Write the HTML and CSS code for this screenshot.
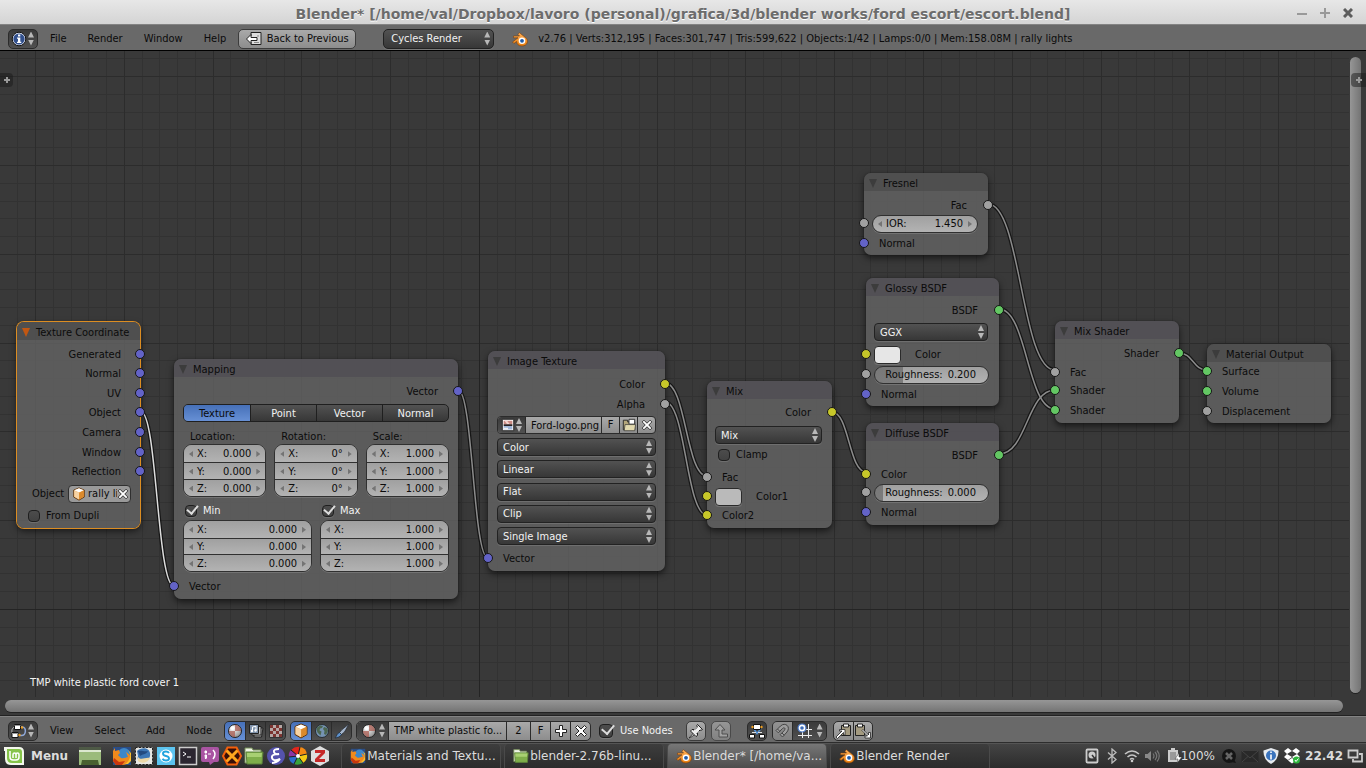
FILE: index.html
```html
<!DOCTYPE html>
<html lang="en">
<head>
<meta charset="utf-8">
<title>Blender* [/home/val/Dropbox/lavoro (personal)/grafica/3d/blender works/ford escort/escort.blend]</title>
<link rel="stylesheet" href="styles.css">
</head>
<body>
<svg class="defs" aria-hidden="true">
  <defs>
    <linearGradient id="gOrange" x1="0" y1="0" x2="0" y2="1"><stop offset="0" stop-color="#ffb25a"/><stop offset="1" stop-color="#e87d0d"/></linearGradient>
    <radialGradient id="gBall" cx=".35" cy=".3" r=".8"><stop offset="0" stop-color="#fff"/><stop offset="1" stop-color="#888"/></radialGradient>
    <symbol id="blender" viewBox="0 0 16 16">
      <path d="M.500 11 6 6.800H1.500V5h6L5.800 3.300 7.500 1.800l6.300 5c3.200 2.700 1.700 8.200-3.800 8.200-3.600 0-5.400-2-5.400-4.600L2 12.500z" fill="url(#gOrange)" stroke="#7a3c08" stroke-width=".6"/>
      <circle cx="10" cy="9.800" r="3.300" fill="#fff"/><circle cx="10" cy="9.800" r="1.900" fill="#1f5ba8"/>
    </symbol>
    <symbol id="info" viewBox="0 0 16 16">
      <circle cx="8" cy="8" r="6.800" fill="#d8dfee" stroke="#111" stroke-width="1"/><circle cx="8" cy="8" r="5.600" fill="#314f8c"/>
      <path d="M7 3.500h2.300v2H7zM6 6.500h3.300v4.300h1V12H6v-1.200h1V7.700H6z" fill="#fff"/>
    </symbol>
    <symbol id="back" viewBox="0 0 16 16">
      <path d="M5 1.500h10v12H5V11M5 5V1.500" fill="#ddd" stroke="#222"/><path d="M11 5h2M13 11.500H8" stroke="#888"/>
      <path d="M.500 8 5 3.500v3h6v3H5v3z" fill="#fff" stroke="#222"/>
    </symbol>
    <symbol id="nodetree" viewBox="0 0 16 16">
      <path d="M9 4h2.500c4 0 4 8.500-1 8.500H8" fill="none" stroke="#8fa8d8" stroke-width="1.500"/><path d="M3 4.500C.500 5 .500 9 1.500 10.500" fill="none" stroke="#bbb"/>
      <path d="M3.500 1.500h6v5h-6zM1 9.500h6v5H1z" fill="#fff" stroke="#111"/><path d="M3.500 2.500h6M1 10.500h6" stroke="#999"/>
      <circle cx="11" cy="4.500" r="1.200" fill="#f0a020"/><circle cx="8.500" cy="12" r="1.200" fill="#f0a020"/>
    </symbol>
    <symbol id="material" viewBox="0 0 16 16">
      <circle cx="8" cy="8" r="6.500" fill="url(#gBall)" stroke="#222"/><path d="M8 8V1.700A6.300 6.300 0 0 1 14 8zM8 8v6.300A6.300 6.300 0 0 1 2 8z" fill="#a9564a" opacity=".7"/>
      <ellipse cx="5.500" cy="5" rx="2.200" ry="2" fill="#fff" opacity=".8"/>
    </symbol>
    <symbol id="compositor" viewBox="0 0 16 16">
      <path d="M6 5h9l-1.500 9H6z" fill="#aaa" stroke="#222"/><path d="M4 3.500h9V12H4z" fill="#bbb" stroke="#222"/><path d="M1.500 1.500h9v9h-9z" fill="#8194ad" stroke="#222"/><path d="M4.500 8V4L8 3.300V7.500" fill="none" stroke="#fff"/><circle cx="4" cy="8" r="1.200" fill="#fff"/><circle cx="7.500" cy="7.500" r="1.200" fill="#fff"/>
    </symbol>
    <symbol id="texture" viewBox="0 0 16 16">
      <path d="M1.500 1.500h13v13h-13z" fill="#b5a8a6" stroke="#333"/><path d="M2 2h3v3H2zM8 2h3v3H8zM5 5h3v3H5zM11 5h3v3h-3zM2 8h3v3H2zM8 8h3v3H8zM5 11h3v3H5zM11 11h3v3h-3z" fill="#7c3430"/>
    </symbol>
    <symbol id="cube" viewBox="0 0 16 16">
      <path d="M8 1 14 3.500v8L8 15l-6-3.500v-8z" fill="#e9a04b" stroke="#58300a"/><path d="M2.500 4 8 6.500V14.200L2.500 11z" fill="#f7d3a4"/><path d="M2.500 3.700 8 1.500l5.500 2.200L8 6.300z" fill="#fff"/><path d="M8.200 6.500 13.500 4v7.200L8.200 14.200z" fill="#dc8a2c"/>
    </symbol>
    <symbol id="world" viewBox="0 0 16 16">
      <circle cx="8" cy="8" r="6.500" fill="#7593b3" stroke="#272d33"/><path d="M3 4.500 6 2.500l3 .500-1 2-2 .500-.500 2 2 1-1 4-3-3-1-3zM10 4l3 1 1 3-2 4-2-1 .500-3L9 6z" fill="#4c6650"/>
    </symbol>
    <symbol id="brush" viewBox="0 0 16 16">
      <path d="M15 1 8 6.500 5.500 9.500 7.500 11.500l3-2.500z" fill="#a3b4ca" stroke="#2a2f36" stroke-width=".8"/><path d="M5.500 9.500 7.500 11.500c-1 2.500-4 3-6.500 3.500C3 13 2.500 10.500 5.500 9.500z" fill="#5f92cc" stroke="#26303c" stroke-width=".8"/>
    </symbol>
    <symbol id="cross" viewBox="0 0 16 16">
      <path d="m2.500 4.500 2-2L8 6l3.500-3.500 2 2L10 8l3.500 3.500-2 2L8 10l-3.500 3.500-2-2L6 8z" fill="#fff" stroke="#222"/>
    </symbol>
    <symbol id="plus" viewBox="0 0 16 16">
      <path d="M6.500 2.500h3v4h4v3h-4v4h-3v-4h-4v-3h4z" fill="#fff" stroke="#222"/>
    </symbol>
    <symbol id="pin" viewBox="0 0 16 16">
      <path d="M6 9.500 1 15l1.500-.500L7.500 11z" fill="#eee" stroke="#222" stroke-width=".8"/><path d="m9.500 1.500 5 5-1.500.800-1-.300-2.500 2.500v3L8 13.500 2.500 8 4 6.500h3L9.300 4l-.500-1.500z" fill="#eee" stroke="#222"/><path d="m5 8 4-4M8 11l3-3" stroke="#999"/>
    </symbol>
    <symbol id="up" viewBox="0 0 16 16">
      <path d="m7 1.500 5 5.500H9v4h5.500v3H6V7H2z" fill="#bbb" stroke="#444"/>
    </symbol>
    <symbol id="autonode" viewBox="0 0 16 16">
      <path d="m4.500 5.500 3.500 5 4-5" fill="none" stroke="#5596dc" stroke-width="1.500"/><path d="M4.500 1.500h7v5h-7zM.500 11.500h5v3.500h-5zM10.500 11.500h5v3.500h-5z" fill="#fff" stroke="#111"/><path d="M3 9.500h4M9 9.500h4" stroke="#ddd"/><circle cx="3.500" cy="4" r="1.200" fill="#f0a020"/><circle cx="12.500" cy="4" r="1.200" fill="#f0a020"/>
    </symbol>
    <symbol id="magnet" viewBox="0 0 16 16">
      <path d="m2 7.500 4.500-4.500c5-4.500 10.500 1 6.500 6L8.500 14l-2.300-2.300L10.300 7.500C12 5 10 4 8.500 5.500L4.300 9.800z" fill="#b5b5b5" stroke="#444"/><path d="m3.500 6 2.300 2.300M8 10l2.300 2.300" stroke="#444"/>
    </symbol>
    <symbol id="snapgrid" viewBox="0 0 16 16">
      <path d="M5.500 1v14M11.500 1v14M1 6.500h14M1 12.500h14" stroke="#eee"/><circle cx="5" cy="5" r="4" fill="#fff" stroke="#4474c4" stroke-width="1.200"/><circle cx="5" cy="5" r="1.800" fill="#3c6cb8"/>
    </symbol>
    <symbol id="copy" viewBox="0 0 16 16">
      <path d="M6.500 2.500h9v10h-9z" fill="#a39a80" stroke="#222"/><path d="M8.500 1h5v3h-5z" fill="#fff" stroke="#222"/><path d="m1 14 6-6H4.500V6.500H10V12H8.500V9.500l-6 6z" fill="#fff" stroke="#222" stroke-width=".8"/>
    </symbol>
    <symbol id="paste" viewBox="0 0 16 16">
      <path d="M.500 2.500h9v10h-9z" fill="#a39a80" stroke="#222"/><path d="M2.500 1h5v3h-5z" fill="#fff" stroke="#222"/><path d="m7 7.500 5.500 5.500H10v2h5.500V9.500h-2V12L8 6.500z" fill="#fff" stroke="#222" stroke-width=".8"/>
    </symbol>
    <symbol id="image" viewBox="0 0 16 16">
      <path d="M1.500 1.500h13v13h-13z" fill="#fff" stroke="#222"/><path d="M3 3h10v4H3z" fill="#c98a83"/><path d="M4 3h3l3 4H7z" fill="#f2d4ce"/><path d="M3 7h10v2H3z" fill="#2b2222"/><path d="M3 9h10v4H3z" fill="#9db4d6"/><path d="M3 11h5v2H3z" fill="#f1f1f1"/>
    </symbol>
    <symbol id="open" viewBox="0 0 16 16">
      <path d="M1.500 2.500h5v2h8v9h-13z" fill="#b5a77a" stroke="#222"/><path d="M8 1.500h6.500V7H8z" fill="#fff" stroke="#222"/><path d="M3.500 7.500h12l-1 7h-12z" fill="#e2d9ae" stroke="#333" stroke-width=".8"/>
    </symbol>
    <symbol id="firefox" viewBox="0 0 20 20">
      <rect x="1" y="1" width="18" height="18" fill="#2a4d86"/><circle cx="12" cy="8" r="6" fill="#3d87c9"/><path d="M1 5 3 2v3l4-1 1 3-2 2 3 3c3 1 5-1 7-1l-2-5 4 3c1 5-1 10-8 10H4L1 15z" fill="#f08a1c"/><path d="M16 4c4 5 2 11-3 14h3l3-3V7z" fill="#fbc02c"/><path d="m2 12 5 4 6-1-3 4H4l-3-4z" fill="#c9370f"/>
    </symbol>
    <symbol id="folder" viewBox="0 0 20 20">
      <path d="M1 2h7l1 2h8v13H1z" fill="#eef4e4" stroke="#738c55"/><path d="M2 6h17l-1 12H3z" fill="#7fae4a" stroke="#5c813a"/><path d="M3 7h15l-.500 4H3z" fill="#a8d072"/>
    </symbol>
    <pattern id="grid" x="35" y="114" width="444" height="444" patternUnits="userSpaceOnUse">
      <path class="grid-minor" d="M18.500 0v444M36.500 0v444M53.500 0v444M71.500 0v444M107.500 0v444M124.500 0v444M142.500 0v444M160.500 0v444M195.500 0v444M213.500 0v444M231.500 0v444M249.500 0v444M284.500 0v444M302.500 0v444M320.500 0v444M337.500 0v444M373.500 0v444M391.500 0v444M408.500 0v444M426.500 0v444M0 18.500h444M0 36.500h444M0 53.500h444M0 71.500h444M0 107.500h444M0 124.500h444M0 142.500h444M0 160.500h444M0 195.500h444M0 213.500h444M0 231.500h444M0 249.500h444M0 284.500h444M0 302.500h444M0 320.500h444M0 337.500h444M0 373.500h444M0 391.500h444M0 408.500h444M0 426.500h444"/>
      <path class="grid-major" d="M.500 0v444M89.500 0v444M178.500 0v444M266.500 0v444M355.500 0v444M0 .500h444M0 89.500h444M0 178.500h444M0 266.500h444M0 355.500h444"/>
    </pattern>
  </defs>
</svg>

<header class="titlebar">
  <h1>Blender* [/home/val/Dropbox/lavoro (personal)/grafica/3d/blender works/ford escort/escort.blend]</h1>
  <div class="window-buttons">
    <button type="button" aria-label="Minimize"><svg viewBox="0 0 10 10"><path d="M0 6h10" stroke="#999" stroke-width="2"/></svg></button>
    <button type="button" aria-label="Maximize"><svg viewBox="0 0 10 10"><path d="M0 5h10M5 0v10" stroke="#999" stroke-width="2"/></svg></button>
    <button type="button" aria-label="Close"><svg viewBox="0 0 10 10"><path d="m1 1 8 8M9 1 1 9" stroke="#5c5c5c" stroke-width="3"/></svg></button>
  </div>
</header>

<nav class="header info-header">
  <button type="button" class="editor-type updown" aria-label="Editor type"><svg class="ic"><use href="#info"/></svg></button>
  <div class="menus">
    <button type="button">File</button><button type="button">Render</button><button type="button">Window</button><button type="button">Help</button>
  </div>
  <button type="button" class="light-button back"><svg class="ic"><use href="#back"/></svg>Back to Previous</button>
  <div class="menu updown engine"><select aria-label="Render engine"><option>Cycles Render</option></select></div>
  <svg class="ic logo"><use href="#blender"/></svg>
  <span class="stats">v2.76 | Verts:312,195 | Faces:301,747 | Tris:599,622 | Objects:1/42 | Lamps:0/0 | Mem:158.08M | rally lights</span>
</nav>

<main class="editor">
  <svg class="grid" aria-hidden="true"><rect width="100%" height="100%" fill="url(#grid)"/><path class="grid-axis" d="M479.500 0v648M0 558.500h1349"/></svg>
  <svg class="links" aria-hidden="true">
    <defs>
      <path id="l1" d="M141 361C157 361 157 535 174 535"/>
      <path id="l2" d="M458 339C473 339 473 507 488 507"/>
      <path id="l3" d="M665 332C686 332 686 425 707 425"/>
      <path id="l4" d="M665 351C686 351 686 464 707 464"/>
      <path id="l5" d="M832 361C849 361 849 421 866 421"/>
      <path id="l6" d="M988 153C1021 153 1021 319 1055 319"/>
      <path id="l7" d="M999 258C1027 258 1027 358 1055 358"/>
      <path id="l8" d="M999 403C1027 403 1027 339 1055 339"/>
      <path id="l9" d="M1179 302C1193 302 1193 319 1207 319"/>
    </defs>
    <g class="wire-shadow"><use href="#l1"/><use href="#l2"/><use href="#l3"/><use href="#l4"/><use href="#l5"/><use href="#l6"/><use href="#l7"/><use href="#l8"/><use href="#l9"/></g>
    <g class="wire"><use class="wire-active" href="#l1"/><use href="#l2"/><use href="#l3"/><use href="#l4"/><use href="#l5"/><use href="#l6"/><use href="#l7"/><use href="#l8"/><use href="#l9"/></g>
  </svg>

  <section class="node plain selected n-texcoord">
    <h2>Texture Coordinate</h2>
    <ul class="sockets seven">
      <li class="out vec">Generated</li><li class="out vec">Normal</li><li class="out vec">UV</li><li class="out vec">Object</li><li class="out vec">Camera</li><li class="out vec">Window</li><li class="out vec">Reflection</li>
    </ul>
    <div class="object-row">
      <label for="obj">Object</label>
      <div class="object-field"><svg class="ic"><use href="#cube"/></svg><input id="obj" value="rally li"><button type="button" aria-label="Clear object"><svg class="ic"><use href="#cross"/></svg></button></div>
    </div>
    <label class="check dark-text"><input type="checkbox">From Dupli</label>
  </section>

  <section class="node n-mapping">
    <h2>Mapping</h2>
    <ul class="sockets"><li class="out vec">Vector</li></ul>
    <div class="tabs"><button type="button" class="on">Texture</button><button type="button">Point</button><button type="button">Vector</button><button type="button">Normal</button></div>
    <div class="cols three">
      <fieldset><legend>Location:</legend><div class="stack">
        <label class="num">X:<input value="0.000"></label><label class="num">Y:<input value="0.000"></label><label class="num">Z:<input value="0.000"></label></div></fieldset>
      <fieldset><legend>Rotation:</legend><div class="stack">
        <label class="num">X:<input value="0°"></label><label class="num">Y:<input value="0°"></label><label class="num">Z:<input value="0°"></label></div></fieldset>
      <fieldset><legend>Scale:</legend><div class="stack">
        <label class="num">X:<input value="1.000"></label><label class="num">Y:<input value="1.000"></label><label class="num">Z:<input value="1.000"></label></div></fieldset>
    </div>
    <div class="cols two">
      <div><label class="check"><input type="checkbox" checked>Min</label><div class="stack">
        <label class="num">X:<input value="0.000"></label><label class="num">Y:<input value="0.000"></label><label class="num">Z:<input value="0.000"></label></div></div>
      <div><label class="check"><input type="checkbox" checked>Max</label><div class="stack">
        <label class="num">X:<input value="1.000"></label><label class="num">Y:<input value="1.000"></label><label class="num">Z:<input value="1.000"></label></div></div>
    </div>
    <ul class="sockets"><li class="in vec">Vector</li></ul>
  </section>

  <section class="node n-image">
    <h2>Image Texture</h2>
    <ul class="sockets"><li class="out col">Color</li><li class="out val">Alpha</li></ul>
    <div class="id-block">
      <button type="button" class="id-type updown" aria-label="Browse image"><svg class="ic"><use href="#image"/></svg></button><input value="Ford-logo.png" aria-label="Image name"><button type="button">F</button><button type="button" aria-label="Open image"><svg class="ic"><use href="#open"/></svg></button><button type="button" aria-label="Unlink image"><svg class="ic"><use href="#cross"/></svg></button>
    </div>
    <div class="menus-stack">
      <div class="menu updown"><select aria-label="Color space"><option>Color</option></select></div>
      <div class="menu updown"><select aria-label="Interpolation"><option>Linear</option></select></div>
      <div class="menu updown"><select aria-label="Projection"><option>Flat</option></select></div>
      <div class="menu updown"><select aria-label="Extension"><option>Clip</option></select></div>
      <div class="menu updown"><select aria-label="Source"><option>Single Image</option></select></div>
    </div>
    <ul class="sockets"><li class="in vec">Vector</li></ul>
  </section>

  <section class="node n-mix">
    <h2>Mix</h2>
    <ul class="sockets"><li class="out col">Color</li></ul>
    <div class="menu updown"><select aria-label="Blend type"><option>Mix</option></select></div>
    <label class="check dark-text"><input type="checkbox">Clamp</label>
    <ul class="sockets"><li class="in val">Fac</li><li class="in col with-swatch"><button type="button" class="swatch grey" aria-label="Color1 value"></button>Color1</li><li class="in col">Color2</li></ul>
  </section>

  <section class="node plain n-fresnel">
    <h2>Fresnel</h2>
    <ul class="sockets"><li class="out val">Fac</li><li class="in val field"><label class="num single">IOR:<input value="1.450"></label></li><li class="in vec">Normal</li></ul>
  </section>

  <section class="node n-glossy">
    <h2>Glossy BSDF</h2>
    <ul class="sockets"><li class="out shd">BSDF</li></ul>
    <div class="menu updown"><select aria-label="Distribution"><option>GGX</option></select></div>
    <ul class="sockets"><li class="in col with-swatch"><button type="button" class="swatch" aria-label="Color value"></button>Color</li><li class="in val field"><label class="slider" style="--fill:25%">Roughness:<input value="0.200"></label></li><li class="in vec">Normal</li></ul>
  </section>

  <section class="node n-diffuse">
    <h2>Diffuse BSDF</h2>
    <ul class="sockets"><li class="out shd">BSDF</li><li class="in col">Color</li><li class="in val field"><label class="slider" style="--fill:7%">Roughness:<input value="0.000"></label></li><li class="in vec">Normal</li></ul>
  </section>

  <section class="node n-mixshader">
    <h2>Mix Shader</h2>
    <ul class="sockets"><li class="out shd">Shader</li><li class="in val">Fac</li><li class="in shd">Shader</li><li class="in shd">Shader</li></ul>
  </section>

  <section class="node plain n-output">
    <h2>Material Output</h2>
    <ul class="sockets"><li class="in shd">Surface</li><li class="in shd">Volume</li><li class="in val">Displacement</li></ul>
  </section>

  <p class="material-name">TMP white plastic ford cover 1</p>
  <div class="scroll-v"></div>
  <div class="scroll-h"></div>
  <button type="button" class="region-tab left" aria-label="Show tool shelf"></button>
  <button type="button" class="region-tab right" aria-label="Show properties"></button>
</main>

<nav class="header node-header">
  <button type="button" class="editor-type updown" aria-label="Editor type"><svg class="ic"><use href="#nodetree"/></svg></button>
  <div class="menus"><button type="button">View</button><button type="button">Select</button><button type="button">Add</button><button type="button">Node</button></div>
  <div class="toggle-group tree"><button type="button" class="on" aria-label="Shader nodes"><svg class="ic"><use href="#material"/></svg></button><button type="button" aria-label="Compositing nodes"><svg class="ic"><use href="#compositor"/></svg></button><button type="button" aria-label="Texture nodes"><svg class="ic"><use href="#texture"/></svg></button></div>
  <div class="toggle-group"><button type="button" class="on" aria-label="Object"><svg class="ic"><use href="#cube"/></svg></button><button type="button" aria-label="World"><svg class="ic"><use href="#world"/></svg></button><button type="button" aria-label="Line style"><svg class="ic"><use href="#brush"/></svg></button></div>
  <div class="id-block big">
    <button type="button" class="id-type updown" aria-label="Browse material"><svg class="ic"><use href="#material"/></svg></button><input value="TMP white plastic fo..." aria-label="Material name"><button type="button" class="users">2</button><button type="button">F</button><button type="button" aria-label="Add material"><svg class="ic"><use href="#plus"/></svg></button><button type="button" aria-label="Unlink material"><svg class="ic"><use href="#cross"/></svg></button>
  </div>
  <label class="check use-nodes"><input type="checkbox" checked>Use Nodes</label>
  <button type="button" class="light-button sq" aria-label="Pin"><svg class="ic"><use href="#pin"/></svg></button>
  <button type="button" class="light-button sq dim" aria-label="Go to parent"><svg class="ic"><use href="#up"/></svg></button>
  <button type="button" class="dark-button sq" aria-label="Auto offset"><svg class="ic"><use href="#autonode"/></svg></button>
  <div class="snap"><button type="button" class="magnet" aria-label="Snap"><svg class="ic"><use href="#magnet"/></svg></button><button type="button" class="snap-mode updown" aria-label="Snap mode"><svg class="ic"><use href="#snapgrid"/></svg></button></div>
  <div class="clip"><button type="button" aria-label="Copy nodes"><svg class="ic"><use href="#copy"/></svg></button><button type="button" aria-label="Paste nodes"><svg class="ic"><use href="#paste"/></svg></button></div>
</nav>

<footer class="taskbar">
  <button type="button" class="start"><svg class="app" viewBox="0 0 20 20"><path d="M0 1h15q5 0 5 5v13H7q-6 0-6-6V5H0z" fill="#f4f8ee"/><path d="M3 3h12q3 0 3 3v11H8q-5 0-5-5z" fill="#86c44a"/><path d="M6 5v6q0 3 3 3h3q3 0 3-3V9q0-2-1.500-2T12 9v3M12 9q0-2-1.500-2T9 9v3" fill="none" stroke="#fff" stroke-width="1.500"/></svg>Menu</button>
  <div class="launchers">
    <button type="button" class="desktop" aria-label="Show desktop"><svg class="app wide" viewBox="0 0 22 20"><path d="M0 1h22v18H0z" fill="#9bbb7b"/><path d="M0 1h22v3H0z" fill="#4e5a46"/><path d="M0 4h22v2H0z" fill="#dce8cf"/><path d="M3 14h16l1 5H2z" fill="#4a6130"/></svg></button>
    <button type="button" aria-label="Firefox"><svg class="app"><use href="#firefox"/></svg></button>
    <button type="button" aria-label="Thunderbird"><svg class="app" viewBox="0 0 20 20"><path d="M1.500 1.500h17v17h-17z" fill="#e8e8e4" stroke="#222" stroke-dasharray="2 1.500"/><path d="M3 5c4-4 12-4 13 2 1 5-3 9-8 9-4 0-5-4-4-6z" fill="#3c76b4"/><path d="M4 11c3 4 7 0 12 1-2 5-9 6-12 3z" fill="#edd9a8"/><path d="M4 5c4-1 6 1 10 0-2 4-6 3-8 5z" fill="#234b80"/></svg></button>
    <button type="button" aria-label="Skype"><svg class="app" viewBox="0 0 20 20"><rect x="1" y="1" width="18" height="18" fill="#5cc4f0"/><circle cx="10" cy="10" r="6.500" fill="#fff"/><path d="M13 7q-1-1.500-3-1.500-3 0-3 2t3 2.500 3 2.500-3 2q-2.500 0-3.500-1.800" fill="none" stroke="#21a4de" stroke-width="1.900"/></svg></button>
    <button type="button" aria-label="Terminal"><svg class="app" viewBox="0 0 20 20"><rect x="1.500" y="1.500" width="17" height="17" fill="#2b2630" stroke="#ccc" stroke-width="1.500"/><path d="m5 6 3 2-3 2M9 11h4" fill="none" stroke="#fff"/></svg></button>
    <button type="button" aria-label="Pidgin"><svg class="app" viewBox="0 0 20 20"><path d="M3 1h14q2 0 2 2v11q0 2-2 2h-3l-4 3-1-3H3q-2 0-2-2V3q0-2 2-2z" fill="#a954a2"/><path d="M5 5h1.500v2H5zM5 9h1.500v3l-1 1zM8 8h3" stroke="#fff" fill="#fff"/><path d="M13 4q4 4 0 9" fill="none" stroke="#fff" stroke-width="1.500"/></svg></button>
    <button type="button" aria-label="XBMC"><svg class="app" viewBox="0 0 20 20"><path d="M5.500 1.500h9L19 10l-4.500 8.500h-9L1 10z" fill="#3a0f06" stroke="#f4600c" stroke-width="2"/><path d="m4.500 4.500 11 11m0-11-11 11" stroke="#ffa61e" stroke-width="3"/></svg></button>
    <button type="button" aria-label="Files"><svg class="app"><use href="#folder"/></svg></button>
    <button type="button" aria-label="Emacs"><svg class="app" viewBox="0 0 20 20"><circle cx="10" cy="10" r="9" fill="#5553ad"/><path d="M13 3Q7 3 8 6t5 2q-8 0-7 4t8 1q-4 4-8 4" fill="none" stroke="#fff" stroke-width="2"/></svg></button>
    <button type="button" aria-label="Picasa"><svg class="app" viewBox="0 0 20 20"><path d="M10 10 3 4Q7 0 12 1z" fill="#e2261c"/><path d="m10 10 2-9q6 1 7 7z" fill="#f58a13"/><path d="m10 10 9-2q1 6-4 9z" fill="#f7cb13"/><path d="m10 10 5 7q-5 3-9 1z" fill="#38a33b"/><path d="m10 10-4 8q-5-2-5-7z" fill="#2b6fce"/><path d="m10 10-9 1q-1-4 2-7z" fill="#8a36a4"/><path d="m10 10-7-6M10 10l2-9M10 10l9-2M10 10l5 7M10 10l-4 8M10 10l-9 1" stroke="#222"/><circle cx="10" cy="10" r="2" fill="#fff"/></svg></button>
    <button type="button" aria-label="Zotero"><svg class="app" viewBox="0 0 20 20"><path d="m10 0 9 5v10l-9 5-9-5V5z" fill="#dedede"/><path d="M5 4h10v3L9 13h6v3H5v-3l6-6H5z" fill="#c62828"/></svg></button>
  </div>
  <div class="tasks">
    <button type="button"><svg class="ic"><use href="#firefox"/></svg>Materials and Textu...</button>
    <button type="button"><svg class="ic"><use href="#folder"/></svg>blender-2.76b-linu...</button>
    <button type="button" class="current"><svg class="ic"><use href="#blender"/></svg>Blender* [/home/va...</button>
    <button type="button"><svg class="ic"><use href="#blender"/></svg>Blender Render</button>
  </div>
  <div class="tray">
    <svg class="ic" viewBox="0 0 16 16"><rect x="2.500" y="1.500" width="11" height="13" rx="1" fill="none" stroke="#ccc" stroke-width="1.800"/><circle cx="8" cy="7" r="3.500" fill="#ccc"/><path d="m8 7 4 5" stroke="#333" stroke-width="1.500"/></svg>
    <svg class="ic" viewBox="0 0 16 16"><path d="m4 4.500 8 7L8 15V1l4 3.500-8 7" fill="none" stroke="#bbb" stroke-width="1.300"/></svg>
    <svg class="ic" viewBox="0 0 16 16"><path d="M1 6q7-6 14 0M3.500 9q4.500-4 9 0M6 11.500q2-2 4 0" fill="none" stroke="#c5c5c5" stroke-width="1.600"/><circle cx="8" cy="13" r="1.300" fill="#ccc"/></svg>
    <svg class="ic" viewBox="0 0 16 16"><path d="M1 6h2.500L7 3v10L3.500 10H1z" fill="#888"/><path d="M9 5.500q2 2.500 0 5M11 4q3.500 4 0 8M13 2.500q4.500 5.500 0 11" fill="none" stroke="#777" stroke-width="1.200"/></svg>
    <span class="battery"><svg class="ic" viewBox="0 0 16 16"><path d="M4 0h4v2h3v12H1V2h3z" fill="#ccc"/><path d="M3 4h6v8H3z" fill="#999"/><path d="m12 5-4 6h3l-1 4 5-6h-3z" fill="#fff" stroke="#333" stroke-width=".500"/></svg>100%</span>
    <svg class="ic" viewBox="0 0 16 16"><circle cx="8" cy="8" r="7" fill="#151515"/><path d="m10 14 5 1-2-4z" fill="#151515"/><path d="m5 5 6 6m0-6-6 6" stroke="#666" stroke-width="2.500"/></svg>
    <svg class="ic mail" viewBox="0 0 18 16"><rect x=".500" y="3" width="17" height="11" fill="#292929"/><path d="m1 3 8 7 8-7M1 14l6-5.500M17 14l-6-5.500" fill="none" stroke="#444"/></svg>
    <svg class="ic" viewBox="0 0 16 16"><path d="m8 0 7.500 2.500q.500 9-7.500 13.500Q0 11.500.500 2.500z" fill="#e7ebef"/><circle cx="8" cy="7.500" r="5" fill="#3973bd"/><path d="M8 3.500v1.500M8 6.500v5" stroke="#fff" stroke-width="1.600"/></svg>
    <svg class="ic wide" viewBox="0 0 18 16"><path d="M5 0 9 3l4-3 4 3-3 3 3 3-4 3-4-3-4 3-4-3 3-3-3-3zM9 3 4 6l5 3 5-3z" fill="#fff" fill-rule="evenodd"/><path d="m5 12.500 4-2.500 4 2.500-4 3z" fill="#fff"/><circle cx="13.500" cy="12" r="3.500" fill="#2fb53d"/><path d="m12 12 1 1.500 2.500-3" fill="none" stroke="#fff"/></svg>
    <time>22.42</time>
    <svg class="ic" viewBox="0 0 16 16"><path d="M1.500 2.500h9v7h-9z" fill="none" stroke="#ccc" stroke-width="1.800"/><path d="M12 6h3v7.500H6V11" fill="none" stroke="#ccc" stroke-width="1.800"/></svg>
  </div>
</footer>
</body>
</html>
```
FILE: styles.css
```css
:root {
  --ui: "DejaVu Sans Condensed", "DejaVu Sans", sans-serif;
  --dark: linear-gradient(#3a3a3a, #505050);
  --menu: linear-gradient(#525252, #373737);
  --light: linear-gradient(#a9a9a9, #8d8d8d);
  --blue: linear-gradient(#4670b8, #6790d5);
}
* { box-sizing: border-box; }
body {
  margin: 0;
  height: 100vh;
  display: flex;
  flex-direction: column;
  overflow: hidden;
  background: #393939;
  font: 11px/14px var(--ui);
  color: #0b0b0b;
}
button, input, select { font: inherit; color: inherit; margin: 0; padding: 0; border: 0; background: none; border-radius: 0; outline: 0; }
button { display: inline-flex; align-items: center; justify-content: center; flex: none; }
h1, h2, p, ul { margin: 0; padding: 0; font-weight: normal; list-style: none; }
.defs { position: absolute; width: 0; height: 0; }
.ic { width: 16px; height: 16px; flex: none; display: block; }

/* window title */
.titlebar {
  flex: none;
  height: 24px;
  display: grid;
  grid-template-columns: 80px 1fr 80px;
  align-items: center;
  background: linear-gradient(#e7e7e7, #d4d4d4);
}
.titlebar h1 { grid-column: 2; text-align: center; white-space: nowrap; font: bold 14px/24px "DejaVu Sans", sans-serif; padding-top: 2px; color: #6c6c6c; text-shadow: 0 1px #fff; }
.window-buttons { display: flex; justify-content: flex-end; gap: 13px; padding-right: 13px; }
.window-buttons svg { width: 10px; height: 10px; display: block; }

/* editor headers */
.header {
  flex: none;
  display: flex;
  align-items: center;
  padding: 2px 8px 0;
  background: #696969;
  border-top: 1px solid #838383;
  white-space: nowrap;
}
.info-header { height: 27px; border-bottom: 1px solid #000; }
.node-header { height: 27px; border-bottom: 1px solid #2d2d2d; }
.menus { display: flex; gap: 21px; padding-left: 12px; }
.header .menus, .stats { padding-top: 1px; }
.editor-type { width: 30px; height: 20px; padding-right: 8px; border: 1px solid #2b2b2b; border-radius: 5px; background: var(--dark); }
.light-button { height: 20px; border: 1px solid #3c3c3c; border-radius: 5px; background: var(--light); }
.dark-button { height: 20px; border: 1px solid #2b2b2b; border-radius: 5px; background: var(--dark); }
.sq { width: 20px; }
.back { margin: 0 27px 0 12px; gap: 5px; width: 118px; }
.logo { margin: 0 10px 0 18px; }

/* pair of up and down arrows */
.updown { position: relative; }
.updown::before, .updown::after {
  content: "";
  position: absolute;
  right: 3px;
  width: 6px;
  height: 6px;
  background: #b8b8b8;
  pointer-events: none;
}
.updown::before { top: calc(50% - 7px); clip-path: polygon(50% 0, 100% 100%, 0 100%); }
.updown::after { top: calc(50% + 1px); clip-path: polygon(0 0, 100% 0, 50% 100%); }

.menu { height: 18px; border: 1px solid #222; border-radius: 4px; background: var(--menu); box-shadow: 0 1px rgba(255, 255, 255, .12); }
.menu select { display: block; width: 100%; height: 100%; padding: 1px 16px 0 5px; appearance: none; color: #f2f2f2; }
.menu option { color: #111; }
.engine { width: 111px; height: 20px; border-radius: 5px; }
.engine select { padding-left: 7px; }

/* free canvas for the nodes */
.editor { position: relative; flex: 1; min-height: 0; overflow: hidden; background: #393939; border-bottom: 1px solid #222; }
.grid { position: absolute; top: 0; left: 0; width: calc(100% - 17px); height: calc(100% - 18px); }
.grid-minor { stroke: #323232; fill: none; }
.grid-major { stroke: #2c2c2c; fill: none; }
.grid-axis { stroke: #242424; fill: none; }
.links { position: absolute; top: 0; left: 0; width: 100%; height: 100%; }
.wire-shadow { fill: none; stroke: #161616; stroke-width: 4; }
.wire { fill: none; stroke: #8c8c8c; stroke-width: 1.5; }
.wire-active { stroke: #ddd; }

.node {
  position: absolute;
  padding: 0 9px;
  border-radius: 7px;
  background: rgba(100, 100, 100, .8);
  box-shadow: 0 0 1px #1b1b1b, 0 3px 7px rgba(0, 0, 0, .6);
}
.node h2 {
  position: relative;
  height: 18px;
  margin: 0 -9px;
  padding: 2px 0 0 19px;
  border-radius: 7px 7px 0 0;
  background: rgba(74, 70, 80, .5);
  font: 11px/18px var(--ui);
}
.node.plain h2 { background: rgba(68, 68, 68, .5); }
.node h2::before { content: ""; position: absolute; left: 5px; top: 6px; width: 8px; height: 9px; background: #3c3c3c; clip-path: polygon(0 0, 100% 0, 50% 100%); }
.node.selected { box-shadow: 0 0 0 1px #dc8d22, 0 3px 7px rgba(0, 0, 0, .6); }
.node.selected h2::before { background: #c25712; }

.n-texcoord { left: 17px; top: 271px; width: 123px; height: 206px; }
.n-mapping { left: 174px; top: 308px; width: 284px; height: 240px; }
.n-image { left: 488px; top: 300px; width: 177px; height: 220px; }
.n-mix { left: 707px; top: 330px; width: 125px; height: 147px; }
.n-fresnel { left: 864px; top: 122px; width: 124px; height: 82px; }
.n-glossy { left: 866px; top: 227px; width: 133px; height: 128px; }
.n-diffuse { left: 866px; top: 372px; width: 133px; height: 102px; }
.n-mixshader { left: 1055px; top: 270px; width: 124px; height: 102px; }
.n-output { left: 1207px; top: 293px; width: 124px; height: 79px; }

/* socket rows */
.sockets { margin: 0 -9px; padding-top: 5px; display: grid; grid-auto-rows: 20px; }
.sockets li { position: relative; display: flex; align-items: center; }
.out { justify-content: flex-end; padding-right: 20px; }
.in { padding-left: 15px; }
.sockets li::after {
  content: "";
  position: absolute;
  top: calc(50% - 6px);
  width: 10px;
  height: 10px;
  border: 1px solid #161616;
  border-radius: 50%;
  box-sizing: border-box;
  background: #a1a1a1;
}
.sockets .out::after { right: -5px; }
.sockets .in::after { left: -5px; }
.sockets .vec::after { background: #6363c7; }
.sockets .col::after { background: #c7c729; }
.sockets .shd::after { background: #63c763; }
.seven { height: 142px; grid-auto-rows: 1fr; }
.seven .out { padding-right: 19px; }
.n-mapping .sockets { height: 27px; }
.n-image .sockets { height: 47px; padding-top: 6px; }
.n-image > .sockets:last-child { height: 25px; padding-top: 4px; }
.n-mix .sockets { height: 27px; padding-top: 4px; }
.n-mix > .sockets:last-child { height: 62px; padding-top: 4px; grid-auto-rows: 19px; }
.n-mix .out, .n-fresnel .out, .n-glossy .out, .n-diffuse .out { padding-right: 21px; }
.n-fresnel .sockets { grid-template-rows: 19px 18px 22px; }
.n-glossy .sockets { height: 27px; }
.n-glossy > .sockets:last-child { height: 60px; padding-top: 4px; grid-auto-rows: 20px; }
.n-diffuse .sockets { grid-template-rows: 20px 17px 20px 20px; }
.n-mixshader .sockets { grid-template-rows: 20px 17px 20px 20px; }
.n-output .sockets { padding-top: 0; grid-auto-rows: 20px; }

.with-swatch { gap: 14px; }
.sockets .with-swatch, .sockets .field { padding-left: 8px; }
.field { padding-right: 10px; }
.swatch { width: 27px; height: 18px; border: 1px solid #2b2b2b; border-radius: 4px; background: #e6e6e6; box-shadow: 0 1px rgba(255, 255, 255, .15); }
.grey { background: #bababa; }

.check { display: flex; align-items: center; height: 18px; gap: 6px; color: #f2f2f2; }
.dark-text { color: #0b0b0b; }
.check input {
  appearance: none;
  position: relative;
  width: 12px;
  height: 12px;
  margin: 0 0 0 2px;
  border: 1px solid #1f1f1f;
  border-radius: 4px;
  background: linear-gradient(#4c4c4c, #424242);
  box-shadow: 0 1px rgba(255, 255, 255, .12);
}
.check input:checked::after { content: ""; position: absolute; left: 3px; top: -3px; width: 5px; height: 9px; border: solid #ddd; border-width: 0 2px 2px 0; transform: rotate(40deg); }

.object-row { display: flex; align-items: center; justify-content: space-between; height: 20px; padding-left: 6px; margin-top: 2px; }
.object-field { display: flex; align-items: center; width: 63px; height: 18px; padding: 0 1px 0 3px; border: 1px solid #303030; border-radius: 4px; background: #999; }
.object-field input { width: 0; flex: 1; padding-left: 2px; }
.object-field .ic { width: 14px; height: 14px; }
.object-field button { width: 12px; }
.n-texcoord .check { margin-top: 3px; gap: 6px; padding-left: 0; }

.tabs { display: grid; grid-template-columns: repeat(4, 1fr); height: 18px; border: 1px solid #1f1f1f; border-radius: 5px; overflow: hidden; background: var(--menu); color: #f2f2f2; }
.tabs button { padding-top: 1px; }
.tabs button + button { border-left: 1px solid #1f1f1f; }
.tabs .on { background: var(--blue); color: #0b0b0b; }

.cols { display: grid; gap: 8px; }
.three { grid-template-columns: repeat(3, 1fr); padding-top: 5px; }
.two { grid-template-columns: 1fr 1fr; padding-top: 5px; }
fieldset { margin: 0; padding: 0; border: 0; min-width: 0; }
legend { height: 17px; padding: 3px 0 0 7px; }
.stack, .single, .slider { border: 1px solid #303030; background: linear-gradient(#a2a2a2, #b2b2b2); box-shadow: 0 1px rgba(255, 255, 255, .15); }
.stack { display: grid; grid-auto-rows: 1fr; height: 53px; border-radius: 9px; overflow: hidden; }
.num { display: flex; align-items: center; min-width: 0; padding: 1px 5px 0; background: linear-gradient(#a0a0a0, #b3b3b3); }
.num + .num { border-top: 1px solid #303030; }
.num::before, .num::after { content: ""; flex: none; width: 4px; height: 6px; background: #747474; }
.num::before { margin-right: 4px; clip-path: polygon(100% 0, 100% 100%, 0 50%); }
.num::after { margin-left: 5px; clip-path: polygon(0 0, 100% 50%, 0 100%); }
.num input { flex: 1; width: 0; text-align: right; }
.single, .slider { width: 100%; height: 18px; border-radius: 9px; }
.sockets .single { padding-top: 0; }
.slider { display: flex; align-items: center; justify-content: center; gap: 5px; background: linear-gradient(90deg, rgba(110, 110, 110, .8) var(--fill), transparent var(--fill)), linear-gradient(#a0a0a0, #b3b3b3); }
.slider input { width: 30px; }
.two .stack { height: 52px; }

.id-block { display: flex; height: 18px; border: 1px solid #2b2b2b; border-radius: 4px; overflow: hidden; background: var(--light); }
.id-block .id-type { width: 27px; padding-right: 7px; background: var(--dark); }
.id-block .ic { width: 14px; height: 14px; }
.id-block input { flex: 1; width: 0; padding: 1px 0 0 5px; border-left: 1px solid #2b2b2b; }
.id-block button + button, .id-block input + button { width: 18px; border-left: 1px solid #2b2b2b; }
.menus-stack { display: grid; align-content: space-between; height: 111px; padding-top: 4px; }
.n-mix .menu { margin-right: 1px; margin-left: -1px; }
.n-glossy .menu { margin-right: 2px; margin-left: -1px; }
.n-mix .check { margin-top: 2px; }

.material-name { position: absolute; left: 30px; bottom: 25px; color: #f4f4f4; }
.scroll-v { position: absolute; right: 5px; top: 6px; bottom: 22px; width: 11px; border-radius: 6px; background: linear-gradient(90deg, #969696, #747474); box-shadow: 0 1px #222; }
.scroll-h { position: absolute; left: 5px; right: 23px; bottom: 3px; height: 12px; border-radius: 6px; background: linear-gradient(#969696, #747474); box-shadow: 0 1px #222; }
.region-tab { position: absolute; top: 22px; width: 13px; height: 14px; background: rgba(25, 25, 25, .5); }
.region-tab.left { left: 0; border-radius: 0 4px 4px 0; }
.region-tab.right { right: 0; width: 15px; border-radius: 4px 0 0 4px; }
.region-tab::before { content: ""; width: 6px; height: 6px; background: linear-gradient(#999, #999) center / 6px 2px no-repeat, linear-gradient(#999, #999) center / 2px 6px no-repeat; }

/* bottom header groups */
.toggle-group, .snap, .clip { display: flex; height: 20px; border: 1px solid #2b2b2b; border-radius: 5px; overflow: hidden; background: var(--dark); }
.toggle-group button { width: 20px; }
.toggle-group button + button, .clip button + button { border-left: 1px solid #2b2b2b; }
.toggle-group .on { background: var(--blue); }
.toggle-group { margin-right: 4px; }
.tree { margin-left: 12px; }
.big { width: 235px; height: 20px; border-radius: 5px; }
.big .id-type { width: 31px; }
.big .ic { width: 16px; height: 16px; }
.big input + button.users { width: 24px; }
.big button + button { width: 20px; }
.use-nodes { margin: 0 13px 0 6px; gap: 7px; }
.use-nodes input { width: 14px; height: 14px; }
.use-nodes input:checked::after { left: 4px; width: 6px; height: 10px; }
.dim { margin: 0 16px 0 5px; opacity: .7; }
.snap { margin: 0 6px 0 5px; }
.magnet { width: 19px; background: var(--light); opacity: .8; }
.snap-mode { width: 34px; padding-right: 8px; border-left: 1px solid #2b2b2b; }
.clip { background: var(--light); }
.clip button { width: 19px; }

/* desktop panel */
.taskbar {
  flex: none;
  height: 25px;
  display: flex;
  align-items: center;
  padding: 0 3px 0 4px;
  border-top: 1px solid #555;
  background: linear-gradient(#444, #2c2c2c);
  color: #dcdcdc;
  font: 12px/16px "DejaVu Sans", sans-serif;
  white-space: nowrap;
}
.app { width: 20px; height: 20px; display: block; }
.app.wide { width: 22px; }
.start { gap: 7px; font-weight: bold; }
.launchers { display: flex; gap: 2px; margin-left: 11px; }
.desktop { margin-right: 9px; }
.tasks { display: flex; flex: 1; gap: 3px; align-self: stretch; margin-left: 11px; min-width: 0; }
.tasks button { flex: 0 1 160px; justify-content: flex-start; gap: 1px; padding-left: 8px; border: 1px solid #4a4a4a; border-width: 0 1px; border-radius: 4px 4px 0 0; background: linear-gradient(#3d3d3d, #2c2c2c); overflow: hidden; }
.tasks .current { background: linear-gradient(#777, #4d4d4d); }
.tray { display: flex; align-items: center; gap: 4px; }
.battery { display: flex; align-items: center; margin: 0 2px 0 3px; }
.battery .ic { margin-right: -2px; }
.tray .mail, .tray .wide { width: 18px; }
.tray time { font-weight: bold; }
```
